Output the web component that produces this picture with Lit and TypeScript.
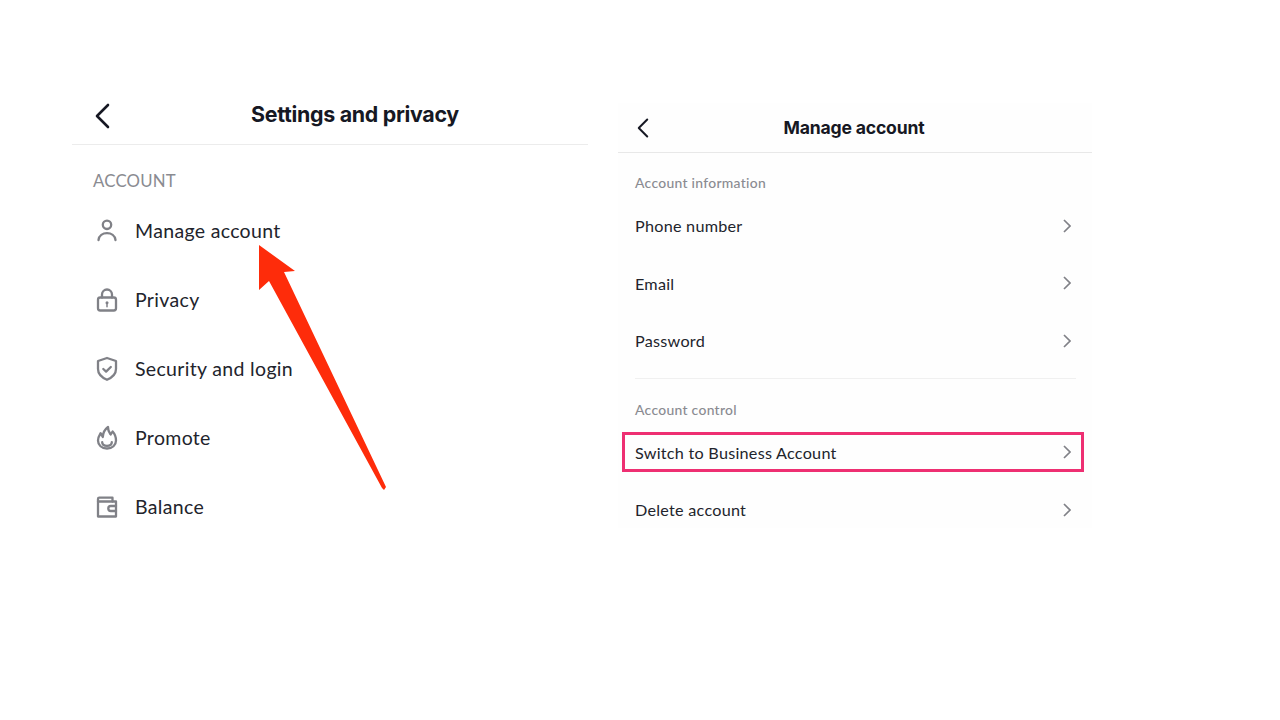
import { LitElement, html, css, svg } from "lit";
import { customElement } from "lit/decorators.js";

const icons: Record<string, unknown> = {
  user: svg`<circle cx="12" cy="6.800" r="4.200"/><path d="M3.500 22c.6-4.300 4.200-6.800 8.500-6.800s7.900 2.500 8.500 6.800"/>`,
  lock: svg`<rect x="3" y="10.500" width="18" height="13" rx="2.200"/><path d="M7 10.500V7.500a5 5 0 0 1 10 0v3"/><circle cx="12" cy="15.800" r="1.500" fill="currentColor" stroke="none"/><path d="M12 16v3.800" stroke-width="1.500"/>`,
  shield: svg`<path d="M12 2 21 5v8c0 5-3.800 8.500-9 10.800C6.800 21.500 3 18 3 13V5z"/><path d="m8.300 13 2.800 2.600 4.700-4.600"/>`,
  fire: svg`<path d="M12 23.500c-5.300 0-9-3.300-9-8 0-2.700 1.200-4.900 2.600-7.300L7.800 12C8 8 9.600 4.500 13 2c-.2 3.500 1.300 5.300 2.700 7.500L17.600 6.500c2.300 2.500 3.400 5.800 3.400 9 0 4.700-3.700 8-9 8Z"/><path d="M7.200 17.200c0 2.400 2.200 3.600 4.800 3.600s4.800-1.200 4.800-3.600"/>`,
  wallet: svg`<path d="M3 7.500V22.500H21V7.500Z"/><path d="M3 7.500V5c0-.8.5-1.300 1.300-1.300H17.500V7.500"/><path d="M21 12H15.800a2.500 2.500 0 0 0 0 5H21"/>`,
};

@customElement("app-root")
export class AppRoot extends LitElement {
  static styles = css`
    :host { display: block; position: relative; width: 1280px; height: 720px; background: #fff; overflow: hidden; font-family: "Lato", "Liberation Sans", sans-serif; color: #22242c; }
    .page { display: flex; align-items: flex-start; padding: 90px 0 0 72px; gap: 30px; }
    .left { width: 516px; flex: none; }
    .lhead { height: 54px; display: flex; align-items: center; position: relative; border-bottom: 1.500px solid #ececec; }
    .lhead svg { margin-left: 23px; width: 15px; height: 26px; margin-top: -2px; }
    .ltitle { position: absolute; left: 283px; top: 9px; transform: translateX(-50%); white-space: nowrap; font: 700 21.400px/30px "Inter", sans-serif; letter-spacing: -0.300px; color: #161823; }
    .lsec { margin: 26px 0 0 21px; font-size: 16.800px; line-height: 20px; color: #8a8b91; letter-spacing: 0.200px; }
    .litems { margin: 5px 0 0 22.500px; display: flex; flex-direction: column; }
    .litem { height: 69px; display: flex; align-items: center; gap: 16.500px; font-size: 19.500px; letter-spacing: 0.330px; }
    .litem svg { width: 24px; height: 26px; fill: none; stroke: #808187; stroke-width: 2.300; stroke-linejoin: round; stroke-linecap: round; color: #808187; }
    .right { width: 474px; flex: none; margin-top: 13px; background: #fefefe; height: 425px; box-sizing: border-box; }
    .rhead { height: 50px; display: flex; align-items: center; position: relative; border-bottom: 1px solid #e8e8e8; box-sizing: border-box; }
    .rhead svg { margin-left: 19px; width: 12px; height: 20px; }
    .rtitle { position: absolute; left: 236px; top: 10px; transform: translateX(-50%); white-space: nowrap; font: 700 17.600px/30px "Inter", sans-serif; letter-spacing: -0.200px; color: #161823; }
    .rlabel { margin-left: 17px; font-size: 13.900px; line-height: 18px; font-weight: 500; color: #8a8b91; letter-spacing: 0.300px; }
    .l1 { margin-top: 21px; }
    .rows { display: flex; flex-direction: column; margin-top: 5px; }
    .row { height: 57.500px; margin-left: 17px; width: 435px; flex: none; display: flex; align-items: center; justify-content: space-between; font-size: 16.200px; letter-spacing: 0.250px; box-sizing: border-box; }
    .row svg { width: 8px; height: 14px; flex: none; margin-right: -1px; fill: none; stroke: #808187; stroke-width: 1.700; }
    .sep { height: 1px; background: #f0f0f0; margin: 8px 16px 0 17px; }
    .l2 { margin-top: 22px; }
    .rows2 { margin-top: 5px; }
    .hl { position: absolute; left: 622px; top: 432px; width: 462px; height: 40px; box-sizing: border-box; border: 3px solid #ee2f72; pointer-events: none; }
    .arrow { position: absolute; left: 250px; top: 240px; width: 140px; height: 255px; }
  `;

  render() {
    const chev = html`<svg viewBox="0 0 8 14"><path d="M1 1l6 6-6 6"/></svg>`;
    const row = (t: string) => html`<div class="row"><span>${t}</span>${chev}</div>`;
    const back = html`<svg viewBox="0 0 15 26" fill="none" stroke="#161823" stroke-width="2.600" stroke-linecap="round" stroke-linejoin="round"><path d="M13 2 2 13l11 11"/></svg>`;
    return html`<div class="page">
        <section class="left">
          <div class="lhead">${back}<div class="ltitle">Settings and privacy</div></div>
          <div class="lsec">ACCOUNT</div>
          <div class="litems">
            ${[["user", "Manage account"], ["lock", "Privacy"], ["shield", "Security and login"], ["fire", "Promote"], ["wallet", "Balance"]].map(
              ([i, t]) => html`<div class="litem"><svg viewBox="0 0 24 26">${icons[i]}</svg><span>${t}</span></div>`
            )}
          </div>
        </section>
        <section class="right">
          <div class="rhead">${back}<div class="rtitle">Manage account</div></div>
          <div class="rlabel l1">Account information</div>
          <div class="rows">${row("Phone number")}${row("Email")}${row("Password")}</div>
          <div class="sep"></div>
          <div class="rlabel l2">Account control</div>
          <div class="rows rows2">${row("Switch to Business Account")}${row("Delete account")}</div>
        </section>
      </div>
      <div class="hl"></div>
      <svg class="arrow" viewBox="250 240 140 255"><path d="M259 245 L295 271 L284 272 L386 487 L384 490 L382 488 L269 281 L259 290 Z" fill="#fe2c0a"/></svg>`;
  }
}
